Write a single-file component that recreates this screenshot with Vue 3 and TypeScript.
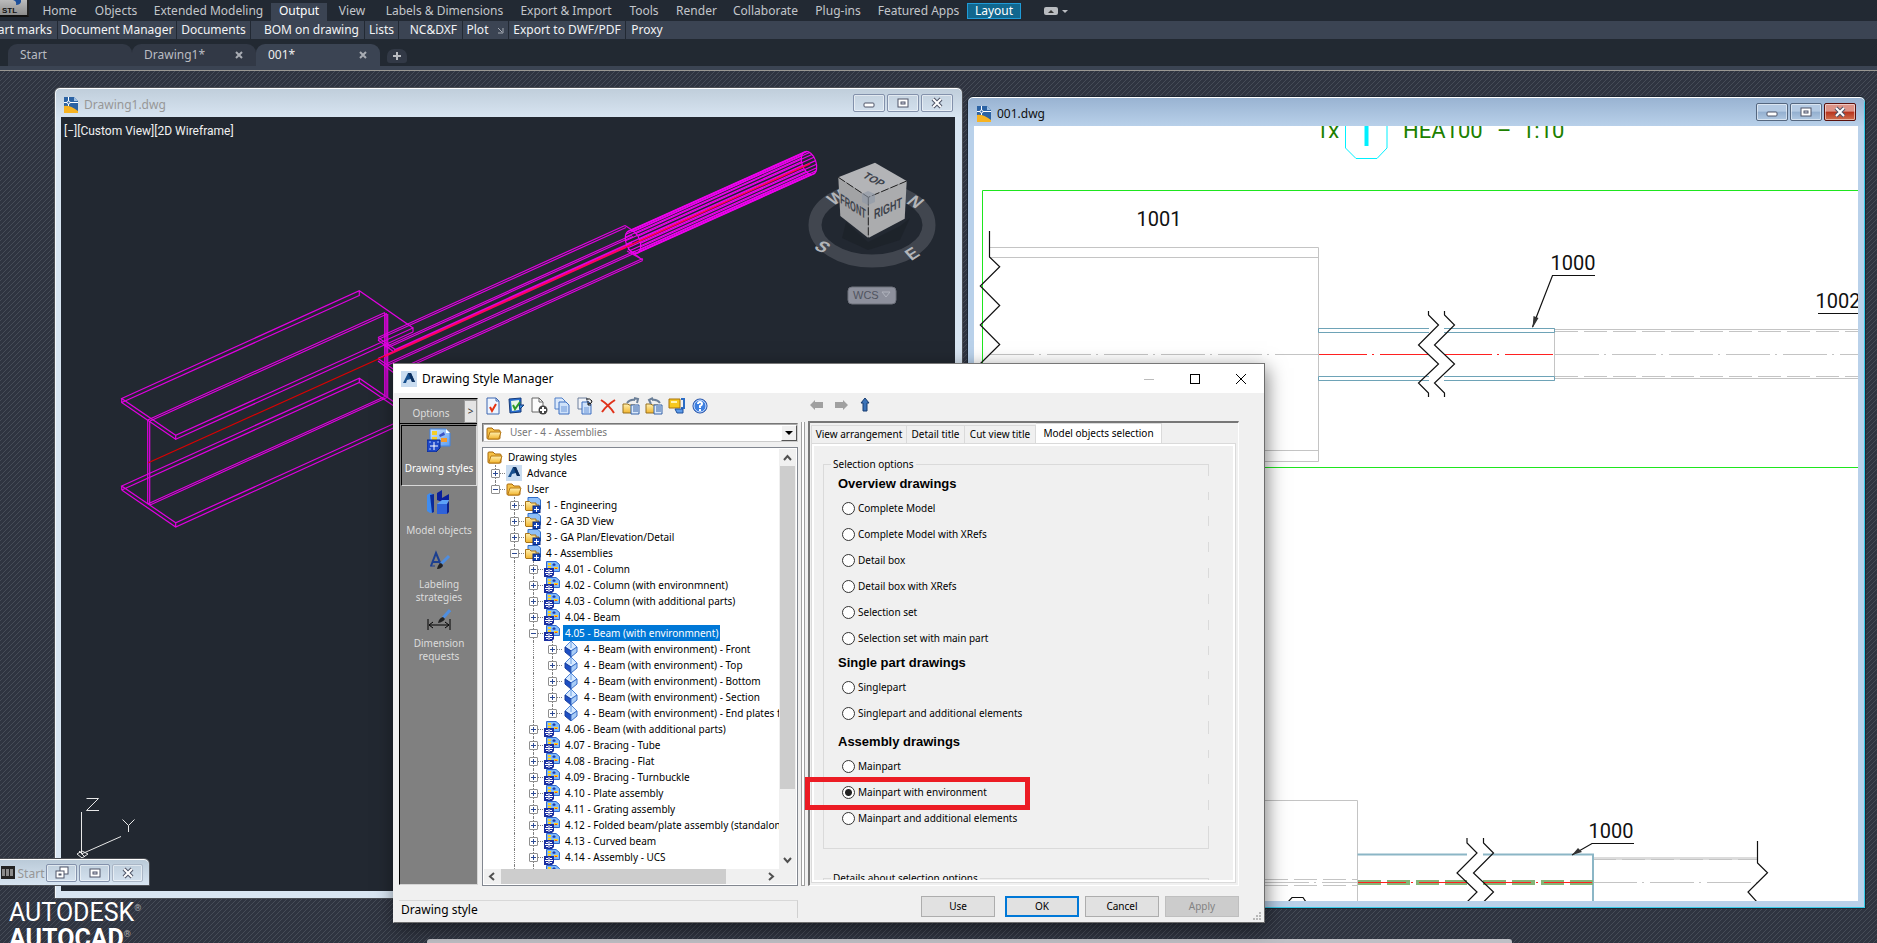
<script setup lang="ts">
import { ref } from 'vue'

interface Slot { label: string; width: number }
interface TreeRow { level: number; label: string; icon: string; state?: 'open' | 'closed'; last?: boolean }

const menus: Slot[] = [
  { label: 'Home', width: 53 }, { label: 'Objects', width: 60 }, { label: 'Extended Modeling', width: 125 },
  { label: 'Output', width: 56 }, { label: 'View', width: 50 }, { label: 'Labels & Dimensions', width: 135 },
  { label: 'Export & Import', width: 108 }, { label: 'Tools', width: 48 }, { label: 'Render', width: 57 },
  { label: 'Collaborate', width: 81 }, { label: 'Plug-ins', width: 64 }, { label: 'Featured Apps', width: 97 },
  { label: 'Layout', width: 54 },
]
const panels: Slot[] = [
  { label: 'Part marks', width: 58 }, { label: 'Document Manager', width: 119 }, { label: 'Documents', width: 74 },
  { label: 'BOM on drawing', width: 114 }, { label: 'Lists', width: 34 }, { label: 'NC&DXF', width: 64 },
  { label: 'Plot', width: 46 }, { label: 'Export to DWF/PDF', width: 117 }, { label: 'Proxy', width: 42 },
]
const activeMenu = ref('Output')

const options = [
  { id: 'ds', lines: ['Drawing styles'] },
  { id: 'mo', lines: ['Model objects'] },
  { id: 'ls', lines: ['Labeling', 'strategies'] },
  { id: 'dr', lines: ['Dimension', 'requests'] },
]
const activeOption = ref('ds')

const tools = ['check', 'apply', 'new', 'copy', 'copyto', 'delete', 'import', 'export', 'archive', 'help']

const rows: TreeRow[] = [
  { level: 0, label: 'Drawing styles', icon: 'folder' },
  { level: 1, label: 'Advance', icon: 'adv', state: 'closed' },
  { level: 1, label: 'User', icon: 'folder', state: 'open', last: true },
  { level: 2, label: '1 - Engineering', icon: 'group', state: 'closed' },
  { level: 2, label: '2 - GA 3D View', icon: 'group', state: 'closed' },
  { level: 2, label: '3 - GA Plan/Elevation/Detail', icon: 'group', state: 'closed' },
  { level: 2, label: '4 - Assemblies', icon: 'group', state: 'open' },
  { level: 3, label: '4.01 - Column', icon: 'style', state: 'closed' },
  { level: 3, label: '4.02 - Column (with environmnent)', icon: 'style', state: 'closed' },
  { level: 3, label: '4.03 - Column (with additional parts)', icon: 'style', state: 'closed' },
  { level: 3, label: '4.04 - Beam', icon: 'style', state: 'closed' },
  { level: 3, label: '4.05 - Beam (with environmnent)', icon: 'style', state: 'open' },
  { level: 4, label: '4 - Beam (with environment) - Front', icon: 'cube', state: 'closed' },
  { level: 4, label: '4 - Beam (with environment) - Top', icon: 'cube', state: 'closed' },
  { level: 4, label: '4 - Beam (with environment) - Bottom', icon: 'cube', state: 'closed' },
  { level: 4, label: '4 - Beam (with environment) - Section', icon: 'cube', state: 'closed' },
  { level: 4, label: '4 - Beam (with environment) - End plates f', icon: 'cube', state: 'closed', last: true },
  { level: 3, label: '4.06 - Beam (with additional parts)', icon: 'style', state: 'closed' },
  { level: 3, label: '4.07 - Bracing - Tube', icon: 'style', state: 'closed' },
  { level: 3, label: '4.08 - Bracing - Flat', icon: 'style', state: 'closed' },
  { level: 3, label: '4.09 - Bracing - Turnbuckle', icon: 'style', state: 'closed' },
  { level: 3, label: '4.10 - Plate assembly', icon: 'style', state: 'closed' },
  { level: 3, label: '4.11 - Grating assembly', icon: 'style', state: 'closed' },
  { level: 3, label: '4.12 - Folded beam/plate assembly (standalon', icon: 'style', state: 'closed' },
  { level: 3, label: '4.13 - Curved beam', icon: 'style', state: 'closed' },
  { level: 3, label: '4.14 - Assembly - UCS', icon: 'style', state: 'closed' },
  { level: 3, label: '', icon: 'style' },
]
const selectedRow = ref('4.05 - Beam (with environmnent)')

const tabs: Slot[] = [
  { label: 'View arrangement', width: 96 }, { label: 'Detail title', width: 58 },
  { label: 'Cut view title', width: 71 }, { label: 'Model objects selection', width: 126 },
]
const activeTab = ref('Model objects selection')

const groups = [
  { title: 'Overview drawings', items: ['Complete Model', 'Complete Model with XRefs', 'Detail box', 'Detail box with XRefs', 'Selection set', 'Selection set with main part'] },
  { title: 'Single part drawings', items: ['Singlepart', 'Singlepart and additional elements'] },
  { title: 'Assembly drawings', items: ['Mainpart', 'Mainpart with environment', 'Mainpart and additional elements'] },
]
const selection = ref('Mainpart with environment')

/* Generator lines of the tube: one per step round its end ellipses. */
const tubeLines = Array.from({ length: 20 }, (_, i) => {
  const a = (i / 20) * Math.PI * 2
  const t = (-20 * Math.PI) / 180
  const u = 7 * Math.cos(a)
  const v = 12 * Math.sin(a)
  const dx = u * Math.cos(t) - v * Math.sin(t)
  const dy = u * Math.sin(t) + v * Math.cos(t)
  return { x1: 633 + dx, y1: 242 + dy, x2: 809 + dx, y2: 163 + dy }
})
const zigTop = '0,0 0,4 10,14 -10,34 10,53 -10,72 0,82 0,86'
const zigLow = '0,0 0,5 10,15 -10,35 10,54 0,64'
</script>

<template>
  <div class="app">
    <svg class="defs" aria-hidden="true">
      <defs>
        <linearGradient id="gold" x1="0" y1="0" x2="0" y2="1"><stop offset="0" stop-color="#fff0b0" /><stop offset="1" stop-color="#f2b52e" /></linearGradient>
        <linearGradient id="sky" x1="0" y1="0" x2="1" y2="1"><stop offset="0" stop-color="#cfe6ff" /><stop offset="1" stop-color="#5c9df0" /></linearGradient>
        <symbol id="i-folder" viewBox="0 0 16 16">
          <path d="M1 13V4q0-1 1-1h4l2 2h5q1 0 1 1v7q0 1-1 1H2q-1 0-1-1z" fill="#f5c045" stroke="#a8690c" />
          <path d="M2 13L4 7h11l-2 6q0 1-1 1H2z" fill="url(#gold)" stroke="#b87a14" />
        </symbol>
        <symbol id="i-adv" viewBox="0 0 16 16">
          <rect width="16" height="16" fill="#c9dcf0" />
          <path d="M2 12L7 2h3l4 9-3 0-1-3-4 1-1 3z" fill="#17508f" /><path d="M7 2h3l4 9h-3L8 4z" fill="#0c2f5e" />
        </symbol>
        <symbol id="i-group" viewBox="0 0 16 16">
          <path d="M3 .5h10l2.500 2.500v9H3z" fill="#8fc0f8" stroke="#2f6cc8" />
          <path d="M.5 13V4.500h4L6 6h5v2h3l-3 5.500H1z" fill="url(#gold)" stroke="#a8741a" />
          <rect x="8" y="9" width="7" height="6.500" fill="#1747b8" stroke="#0b2a80" /><path d="M11.500 10v5M9 12.500h5" stroke="#fff" />
        </symbol>
        <symbol id="i-style" viewBox="0 0 16 16">
          <path d="M2.500 .5h9.500l3.500 3V10.500H2.500z" fill="#7fbafa" stroke="#2f66cc" />
          <path d="M4 2h3v2H4zM4 5h3v2H4zM10 6h4v2h-4z" fill="#ffd21f" /><path d="M8 4l2-2 2 2-2 1z" fill="#1c3fae" />
          <path d="M11 7h2v1h-2z" fill="#e8492b" />
          <path d="M0 7h10v7l-2 2H0z" fill="#1a2fa0" /><path d="M5 8v7M1 11.500h8" stroke="#fff" /><path d="M2 9.500h2M6 9.500h2M2 13.500h2M6 13.500h2" stroke="#fff" />
        </symbol>
        <symbol id="i-cube" viewBox="0 0 16 16">
          <path d="M8 0l6 6-6 4-6-4z" fill="#d6e9ff" stroke="#4f86d8" /><path d="M2 6l6 4v6l-6-5z" fill="#1d4fc4" stroke="#173c9c" />
          <path d="M14 6l-6 4v6l6-5z" fill="#a9cdf7" stroke="#3c70c8" /><path d="M8 1v6" stroke="#6aa0e6" />
        </symbol>
        <symbol id="i-dwg" viewBox="0 0 16 16">
          <path d="M1 0h10l4 4v10H1z" fill="#2c63a4" /><path d="M11 0l4 4h-4z" fill="#9fc0e2" />
          <path d="M1 9q6-1 14 5v2H1z" fill="#f7b322" /><path d="M5.500 0v9M1 5.500h14" stroke="#fff" /><circle cx="5.500" cy="5.500" r="1.500" fill="#2c63a4" stroke="#fff" />
        </symbol>
        <symbol id="i-check" viewBox="0 0 18 18">
          <path d="M3 1h9l3 3v13H3z" fill="#eef5ff" stroke="#3d66b0" /><path d="M12 1v3h3" fill="none" stroke="#3d66b0" />
          <path d="M6 10l2 4 4-7" fill="none" stroke="#e63312" stroke-width="2" />
        </symbol>
        <symbol id="i-apply" viewBox="0 0 18 18">
          <path d="M2 2l12-1v14L3 16z" fill="#2a6fd0" stroke="#163b7a" /><path d="M4 4l8-1v10l-7 1z" fill="#e9f6e4" />
          <path d="M6 8l2 4 5-7" fill="none" stroke="#2d9b28" stroke-width="2" /><path d="M12 8l5 0-4 4z" fill="#3a8bdd" stroke="#163b7a" />
        </symbol>
        <symbol id="i-new" viewBox="0 0 18 18">
          <path d="M2 1h7l4 4v10H2z" fill="#fbfbfb" stroke="#666" /><path d="M9 1v4h4" fill="none" stroke="#666" />
          <circle cx="13" cy="13" r="4.500" fill="#444" /><path d="M13 10v6M10 13h6" stroke="#fff" stroke-width="2" />
        </symbol>
        <symbol id="i-copy" viewBox="0 0 18 18">
          <path d="M2 1h7l3 3v8H2z" fill="#dbe9fb" stroke="#4f7fc8" /><path d="M6 5h7l3 3v9H6z" fill="#cfe2fa" stroke="#3d6fc0" />
          <path d="M8 10h6M8 12h6M8 14h6" stroke="#6c97d8" />
        </symbol>
        <symbol id="i-copyto" viewBox="0 0 18 18">
          <path d="M2 1h9v11H2z" fill="#f2f4f8" stroke="#6d7f9c" /><path d="M6 5h7l2 2v10H6z" fill="#cfe2fa" stroke="#3d6fc0" />
          <path d="M8 11h5M8 13h5M8 15h5" stroke="#6c97d8" /><path d="M10 2q4-1 6 2M16 4q0 3-4 3M12 4v4h3" fill="none" stroke="#111" />
        </symbol>
        <symbol id="i-delete" viewBox="0 0 18 18"><path d="M2 3q8 5 13 13M16 3Q8 8 3 15" fill="none" stroke="#e0321a" stroke-width="2" /></symbol>
        <symbol id="i-import" viewBox="0 0 18 18">
          <path d="M1 16V7h5l1 1h6v8z" fill="url(#gold)" stroke="#98711e" /><path d="M5 6q3-4 8-3M12 1l4 1-1 4" fill="none" stroke="#6b7f98" stroke-width="2" />
          <path d="M9 8h8v9H9z" fill="#dbe9fb" stroke="#3562a8" /><path d="M11 10h5M11 12h5M11 14h5" stroke="#3562a8" />
        </symbol>
        <symbol id="i-export" viewBox="0 0 18 18">
          <path d="M1 16V7h5l1 1h6v8z" fill="url(#gold)" stroke="#98711e" /><path d="M15 6q-3-4-8-3M8 1L4 3l2 4" fill="none" stroke="#6b7f98" stroke-width="2" />
          <path d="M9 8h8v9H9z" fill="#dbe9fb" stroke="#3562a8" /><path d="M11 10h5M11 12h5M11 14h5" stroke="#3562a8" />
        </symbol>
        <symbol id="i-archive" viewBox="0 0 18 18">
          <path d="M1 2h11v9H1z" fill="#f7c81e" stroke="#a8730c" /><path d="M3 4h6v2H3z" fill="#fff3b0" />
          <path d="M13 2h3v9h-2v4" fill="none" stroke="#2c6cc4" stroke-width="2" /><path d="M7 12h8v4H9z" fill="#5e9be8" stroke="#1c4f9c" />
        </symbol>
        <symbol id="i-help" viewBox="0 0 18 18">
          <circle cx="9" cy="9" r="7" fill="#3d7fe0" stroke="#1746a0" /><circle cx="9" cy="9" r="6" fill="none" stroke="#cfe2ff" />
          <path d="M7 7q0-2 2-2t2 2q0 1-2 2v2M9 12v2" fill="none" stroke="#fff" stroke-width="2" />
        </symbol>
        <symbol id="o-ds" viewBox="0 0 24 24">
          <path d="M3 1h16l4 4v13H3z" fill="url(#sky)" stroke="#3f83e6" /><path d="M5 3h5v4H5zM5 9h5v4H5z" fill="#f5cf28" /><path d="M12 7l5-3 1 3-5 2z" fill="#3b53c4" />
          <path d="M14 10h6v4h-6z" fill="#f59a2a" /><path d="M19 1l4 4h-4z" fill="#fff" />
          <path d="M0 12h13v8l-4 4H0z" fill="#1f49c8" stroke="#0c2a8c" /><path d="M7 14v8M3 18h8" stroke="#fff" /><path d="M2 14h2M10 14h2M2 21h2" stroke="#9fc0ff" />
        </symbol>
        <symbol id="o-mo" viewBox="0 0 24 24">
          <path d="M0 5l3-2 4 2v17l-4 1-3-2z" fill="#3f8cf0" /><path d="M3 5l4-1v18l-2 1z" fill="#0a2a9a" />
          <path d="M10 3l5-3v8l7-4v6l-7 2-5-2z" fill="#0a1f9c" /><path d="M10 14l5-4 7 0-2 4z" fill="#5da2f8" /><path d="M10 14h10v10H10z" fill="#2f62d8" /><path d="M20 14l2-3v11l-2 2z" fill="#0a1f8a" />
        </symbol>
        <symbol id="o-ls" viewBox="0 0 24 24">
          <path d="M4 17L9 4l5 12M6 13h7" fill="none" stroke="#1c3f90" stroke-width="2" /><path d="M3 17h5M12 17h4" stroke="#1c3f90" />
          <path d="M22 7l-8 8" stroke="#4f8ee0" stroke-width="3" /><path d="M14 14q-3 1-4 6 5 0 6-4z" fill="#222" />
        </symbol>
        <symbol id="o-dr" viewBox="0 0 24 24">
          <path d="M1 11v11M23 11v11M3 17h18M6 14l-4 3 4 3M18 14l4 3-4 3" fill="none" stroke="#000" />
          <path d="M23 2l-7 8" stroke="#4f8ee0" stroke-width="3" /><path d="M16 9q-4 1-5 6 5-1 7-4z" fill="#222" />
        </symbol>
        <symbol id="w-min" viewBox="0 0 14 14"><rect x="2" y="7" width="10" height="4" rx="1" fill="#fff" stroke="#4f5568" /></symbol>
        <symbol id="w-max" viewBox="0 0 14 14"><rect x="2" y="3" width="10" height="8" fill="#fff" stroke="#4f5568" /><rect x="5" y="6" width="4" height="2" fill="#dde" stroke="#4f5568" /></symbol>
        <symbol id="w-res" viewBox="0 0 14 14"><rect x="5" y="1" width="8" height="7" fill="#fff" stroke="#4f5568" /><rect x="1" y="5" width="8" height="7" fill="#fff" stroke="#4f5568" /><rect x="4" y="8" width="2" height="1" fill="#dde" stroke="#4f5568" /></symbol>
        <symbol id="w-x" viewBox="0 0 14 14"><path d="M3 3l8 8M11 3l-8 8" stroke="#4f5568" stroke-width="4" /><path d="M3 3l8 8M11 3l-8 8" stroke="#fff" stroke-width="2" /></symbol>
      </defs>
    </svg>

    <header>
      <nav class="menu">
        <button class="stl" aria-label="STL"><svg viewBox="0 0 20 6" aria-hidden="true"><path d="M9 0q4 1 3 5 4 0 5-3V0z" fill="#1d4f9a" /></svg><span>STL</span></button>
        <button
          v-for="m in menus" :key="m.label" class="menu-item"
          :class="{ on: m.label === activeMenu, layout: m.label === 'Layout' }"
          :style="{ width: m.width + 'px' }" @click="activeMenu = m.label"
        >{{ m.label }}</button>
        <button class="mini" aria-label="Ribbon display">
          <svg width="24" height="10" viewBox="0 0 24 10" aria-hidden="true"><rect width="14" height="8" y="1" rx="2" fill="#b9bcc1" /><path d="M4 7l3-3 3 3z" fill="#333" /><path d="M18 4h6l-3 3z" fill="#b9bcc1" /></svg>
        </button>
      </nav>
      <div class="panels">
        <button v-for="p in panels" :key="p.label" class="panel-item" :class="{ late: p.label === 'Part marks' || p.label === 'BOM on drawing' || p.label === 'NC&DXF' }" :style="{ width: p.width + 'px' }">
          {{ p.label }}
          <svg v-if="p.label === 'Plot'" width="7" height="7" viewBox="0 0 7 7" aria-hidden="true"><path d="M1 1l4 4M6 1v5H1" fill="none" stroke="#a6abb4" /></svg>
        </button>
      </div>
      <div class="files">
        <button class="file">Start</button>
        <div class="file"><span>Drawing1*</span><button class="fx" aria-label="Close Drawing1"><svg viewBox="0 0 8 8"><path d="M1 1l6 6M7 1L1 7" stroke="#a9adb4" stroke-width="2" /></svg></button></div>
        <div class="file current"><span>001*</span><button class="fx" aria-label="Close 001"><svg viewBox="0 0 8 8"><path d="M1 1l6 6M7 1L1 7" stroke="#a9adb4" stroke-width="2" /></svg></button></div>
        <button class="plus" aria-label="New tab"><svg width="8" height="8" viewBox="0 0 8 8"><path d="M4 0v8M0 4h8" stroke="#b9bcc1" stroke-width="2" /></svg></button>
      </div>
    </header>

    <main class="desk">
      <div class="brand"><p>AUTODESK<sup>®</sup></p><p class="b">AUTOCAD<sup>®</sup></p></div>
      <div class="cmd"></div>

      <section class="win w1">
        <div class="wbar">
          <svg class="dwg" aria-hidden="true"><use href="#i-dwg" /></svg><h2>Drawing1.dwg</h2>
          <button aria-label="Minimize"><svg><use href="#w-min" /></svg></button><button aria-label="Maximize"><svg><use href="#w-max" /></svg></button><button aria-label="Close"><svg><use href="#w-x" /></svg></button>
        </div>
        <svg class="cad" viewBox="61 117 894 775" preserveAspectRatio="xMinYMin slice">
          <text x="64" y="135" class="vp">[−][Custom View][2D Wireframe]</text>
          <g fill="none" stroke="#e000e0" stroke-width="1.200">
            <path d="M121.700 398.500L359.300 290.700 413 328 175.700 435.300zM121.700 402.500L359.300 295.500M175.700 439.300L413 332M121.700 402.500L175.700 439.300M121.700 398v5M175.700 435v5M359.300 291v5M413 328v4" />
            <path d="M121.700 486L359.300 378.300 413 415 175.700 522.700zM121.700 490L359.300 382.500 413 419M121.700 490L175.700 527 413 419M121.700 486v4M175.700 523v4M359.300 378v4" />
            <path d="M147.700 420V504M149.700 421V505M147.700 420L385 312.500M150 421L387 314M147.700 504L385 396.500M150 505L387 397.500" />
            <path d="M384.700 313V396M386.200 313V396M387.700 314V397" />
            <path d="M378 337.500L625 225.500M378 339.500L626 227.500M385 347L632 235M387 348L633 236.500M394 350L632 242M378 358.500L632 243M387 363.500L635 251M388 365L636 252.500M394 371.500L642.700 258.500M394 373.500L642.700 260.500" />
            <path d="M378 337.500L396 350M378 340L394 352M378 358.500L396 371M378 361L394 373M625 225.500L632 230M627 251L643 260M628 249L640 258" />
          </g>
          <path d="M148.300 462.700L385 356" stroke="#dd0000" stroke-width="1.200" />
          <g fill="none" stroke="#f000f0" stroke-width="1.200">
            <line v-for="(l, i) in tubeLines" :key="i" :x1="l.x1" :y1="l.y1" :x2="l.x2" :y2="l.y2" />
            <ellipse cx="633" cy="242" rx="7" ry="12" transform="rotate(-20 633 242)" /><ellipse cx="809" cy="163" rx="7" ry="12" transform="rotate(-20 809 163)" />
          </g>
          <path d="M385 356L626 247" stroke="#ff0060" stroke-width="2" /><path d="M626 247L810 163.700" stroke="#ff0050" stroke-width="1.500" />
          <ellipse cx="872" cy="225" rx="57" ry="36" fill="none" stroke="#41464f" stroke-width="13" />
          <path d="M846 222L868 242 900 226 910 218 900 240 868 250 842 238z" fill="#1a1f26" opacity=".6" />
          <g class="nesw">
            <text transform="translate(818 251) rotate(28) skewX(-20)">S</text><text transform="translate(916 258) rotate(-32) skewX(10)">E</text>
            <text transform="translate(911 206) rotate(28) skewX(-20)">N</text><text transform="translate(840 202) rotate(-30) skewX(10)">W</text>
          </g>
          <path d="M838.300 177.300L875 162.700 906.700 181 868.300 197.300z" fill="#b3b4b7" /><path d="M838.300 177.300L868.300 197.300V238L840.300 216z" fill="#a2a3a5" /><path d="M868.300 197.300L906.700 181 904.700 218.700 868.300 238z" fill="#abacae" />
          <path d="M838.300 177.300L868.300 197.300 906.700 181M868.300 197.300V238" fill="none" stroke="#222" stroke-dasharray="8 2" />
          <path d="M862 194l6-3 7 3v8l-7 3-6-3z" fill="#8e97a6" opacity=".6" />
          <g class="faces">
            <text transform="matrix(.75 .4 -.7 .6 871 182)">TOP</text><text transform="matrix(.62 .4 0 1.150 853 211)">FRONT</text><text transform="matrix(.75 -.34 0 1.150 888 213)">RIGHT</text>
          </g>
          <rect x="848" y="287" width="48" height="17" rx="4" fill="#8d909c" stroke="#6f727d" /><text x="853" y="299" class="wcs">WCS</text><path d="M882 292h8l-4 5z" fill="none" stroke="#b0b3bd" />
          <g fill="none" stroke="#e8e8e8"><path d="M81.500 812V854L121 836.500M77 854l5-3 6 3-6 4zM79 851l6 6" /><path d="M86.500 798.500H98.500L86.500 810.500H99M122.500 819.500l6 6 6-6M128.500 825.500v6.500" /></g>
        </svg>
      </section>

      <section class="win w2">
        <div class="wbar">
          <svg class="dwg" aria-hidden="true"><use href="#i-dwg" /></svg><h2>001.dwg</h2>
          <button aria-label="Minimize"><svg><use href="#w-min" /></svg></button><button aria-label="Maximize"><svg><use href="#w-max" /></svg></button><button class="red" aria-label="Close"><svg><use href="#w-x" /></svg></button>
        </div>
        <svg class="cad" viewBox="974 126 884 775" preserveAspectRatio="xMinYMin slice">
          <g class="green"><text x="1316" y="138">1x</text><text x="1403" y="138">HEA100</text><text x="1497" y="138">–</text><text x="1522" y="138">1:10</text></g>
          <path d="M1345.500 120V148L1356 158.500H1377L1387 148V120" fill="none" stroke="#00f0ff" /><path d="M1366.500 120V146" stroke="#00f0ff" stroke-width="4" />
          <path d="M1870 190.500H982.500V467.500H1870" fill="none" stroke="#1ee61e" />
          <g fill="none" stroke="#c4c4c4">
            <path d="M989 247.500H1318.500V461.500H989M989 257.500H1318.500M989 450.500H1318.500M1554.500 328V381" />
            <path d="M990 354.500H1318" stroke-dasharray="44 5 2 6" /><path d="M1555 354.500H1858" stroke-dasharray="44 5 2 6" />
            <path d="M1555 329.500H1858M1555 378.500H1858" /><path d="M1555 331.500H1858M1555 376.500H1858" stroke-dasharray="23 6" />
            <path d="M1265 800.500H1357.500V905" /><path d="M1265 879.500H1357M1265 885.500H1357" stroke-dasharray="23 6" /><path d="M1265 882.500H1357M1593 882.500H1757" stroke-dasharray="44 5 2 6" />
            <path d="M1593 858.500H1757" stroke="#dcdcdc" stroke-width="3" /><path d="M1593 859.500H1757" stroke-dasharray="23 6" />
          </g>
          <g fill="none" stroke="#6ea3b7">
            <path d="M1429 328.500H1318.500V332.500H1429M1429 376.500H1318.500V380.500H1429M1444 328.500H1554.500V332.500H1444M1444 376.500H1554.500V380.500H1444" />
            <path d="M1357.500 854.500H1467M1483 854.500H1593V905" stroke="#8bb6c6" stroke-width="2" />
          </g>
          <path d="M1319 354.500H1429M1444 354.500H1554" stroke="#ff2020" stroke-dasharray="48 5 2 6" />
          <path d="M1358 882.500H1467M1483 882.500H1593" stroke="#86b476" stroke-width="5" stroke-dasharray="23 6" /><path d="M1358 882.500H1467M1483 882.500H1593" stroke="#ff2020" stroke-dasharray="48 5 2 6" />
          <g fill="none" stroke="#111" stroke-width="1.200">
            <path d="M989.500 231V257L999.700 266.700 980.300 286 999.700 305.500 980.300 325 999.700 344.500 980 364" />
            <polyline :points="zigTop" transform="translate(1428.500 311)" /><polyline :points="zigTop" transform="translate(1444.500 311)" />
            <polyline :points="zigLow" transform="translate(1467 838)" /><polyline :points="zigLow" transform="translate(1483.500 838)" />
            <path d="M1757.500 841V863L1767.500 872.700 1748 892 1757 902M1288 902L1292 897.500H1303L1306 902" />
            <path d="M1532.500 327L1552.500 275.500H1595M1818 313.500H1858M1572 855L1592 843.500H1634" />
          </g>
          <path d="M1532.500 328l1-12 5 2zM1572 855l6-7 4 4z" fill="#333" />
          <g class="num"><text x="1159" y="226">1001</text><text x="1573" y="270">1000</text><text x="1838" y="308">1002</text><text x="1611" y="838">1000</text></g>
        </svg>
      </section>

      <section class="win mini-win">
        <div class="wbar"><span class="film"></span><h2>Start</h2>
          <button aria-label="Restore"><svg><use href="#w-res" /></svg></button><button aria-label="Maximize"><svg><use href="#w-max" /></svg></button><button class="dim" aria-label="Close"><svg><use href="#w-x" /></svg></button></div>
      </section>

      <section class="dialog" role="dialog" aria-label="Drawing Style Manager">
        <div class="dbar">
          <svg width="16" height="16" aria-hidden="true"><use href="#i-adv" /></svg><h1>Drawing Style Manager</h1>
          <button aria-label="Minimize"><svg width="12" height="12"><path d="M1 6.500h10" stroke="#bbb" /></svg></button>
          <button aria-label="Maximize"><svg width="12" height="12"><rect x="1.500" y="1.500" width="9" height="9" fill="none" stroke="#000" /></svg></button>
          <button aria-label="Close"><svg width="12" height="12"><path d="M1 1l10 10M11 1L1 11" stroke="#000" /></svg></button>
        </div>
        <div class="dbody">
          <aside class="opts">
            <div class="ohead"><span>Options</span><button aria-label="Collapse options">&gt;</button></div>
            <button v-for="o in options" :key="o.id" class="opt" :class="[o.id, { on: o.id === activeOption }]" @click="activeOption = o.id">
              <svg width="24" height="24" aria-hidden="true"><use :href="'#o-' + o.id" /></svg>
              <span v-for="l in o.lines" :key="l">{{ l }}</span>
            </button>
          </aside>
          <div class="mid">
            <div class="tools">
              <button v-for="t in tools" :key="t" :aria-label="t"><svg width="18" height="18"><use :href="'#i-' + t" /></svg></button>
            </div>
            <div class="combo">
              <svg width="16" height="16" aria-hidden="true"><use href="#i-folder" /></svg>
              <select aria-label="Style folder"><option>User - 4 - Assemblies</option></select><i></i>
            </div>
            <div class="tree">
              <div class="tview">
                <ul role="tree">
                  <li v-for="(r, n) in rows" :key="n" role="treeitem" @click="selectedRow = r.label">
                    <span v-for="k in r.level" :key="k" class="cell" :class="{ line: k > 1 || r.level === 1, half: k === r.level && r.last, arm: k === r.level }">
                      <b v-if="k === r.level && r.state" :class="r.state"></b>
                    </span>
                    <svg width="16" height="16" aria-hidden="true"><use :href="'#i-' + r.icon" /></svg>
                    <span v-if="r.label" class="label" :class="{ sel: r.label === selectedRow }">{{ r.label }}</span>
                  </li>
                </ul>
                <div class="vs"><svg width="9" height="17"><path d="M1 11l3.500-4L8 11" /></svg><div class="thumb"></div><svg width="9" height="17"><path d="M1 6l3.500 4L8 6" /></svg></div>
              </div>
              <div class="hs"><svg width="17" height="9"><path d="M10 1L6 4.500 10 8" /></svg><div class="thumb"></div><svg width="17" height="9"><path d="M7 1l4 3.500L7 8" /></svg></div>
            </div>
          </div>
          <div class="split"></div>
          <div class="right">
            <div class="navs">
              <button aria-label="Back"><svg width="14" height="14"><path d="M0 7l5-5v2h8v6H5v2z" fill="#a0a0a0" /></svg></button>
              <button aria-label="Forward"><svg width="14" height="14"><path d="M14 7L9 2v2H1v6h8v2z" fill="#a0a0a0" /></svg></button>
              <button aria-label="Up"><svg width="14" height="14"><path d="M7 0l4 5H9v8H5V5H3z" fill="#3b73b8" stroke="#173c70" /></svg></button>
            </div>
            <div class="frame">
              <div class="tabs" role="tablist">
                <button v-for="t in tabs" :key="t.label" role="tab" :class="{ on: t.label === activeTab }" :style="{ width: t.width + 'px' }" @click="activeTab = t.label">{{ t.label }}</button>
              </div>
              <div class="page">
                <fieldset>
                  <legend>Selection options</legend>
                  <div v-for="g in groups" :key="g.title" class="grp">
                    <h3>{{ g.title }}</h3>
                    <label v-for="i in g.items" :key="i"><input v-model="selection" type="radio" name="sel" :value="i">{{ i }}</label>
                  </div>
                </fieldset>
                <fieldset class="second"><legend>Details about selection options</legend></fieldset>
              </div>
            </div>
          </div>
        </div>
        <footer>
          <div class="status">Drawing style</div>
          <div class="btns"><button>Use</button><button class="ok">OK</button><button>Cancel</button><button disabled>Apply</button></div>
          <svg class="grip" width="10" height="10"><path d="M7 1h2M4 4h2M7 4h2M1 7h2M4 7h2M7 7h2" stroke="#b8b8b8" stroke-width="2" /></svg>
        </footer>
        <div class="mark"></div>
      </section>
    </main>
  </div>
</template>

<style>
html, body { margin: 0; background: #222933; overflow: hidden; }
</style>

<style scoped>
* { box-sizing: border-box; }
.app { display: flex; flex-direction: column; height: 100vh; overflow: hidden; font: 12px/16px "Noto Sans", "Open Sans", sans-serif; color: #c3c6cb; }
button, select, input { font: inherit; color: inherit; margin: 0; padding: 0; border: 0; background: none; }
svg { display: block; }
.defs { position: absolute; width: 0; height: 0; }
h1, h2, h3, p, ul { margin: 0; padding: 0; font-weight: normal; }
.menu { display: flex; height: 21px; background: #222933; }
.stl { width: 29px; height: 17px; margin-right: 4px; border-right: 2px solid #222; border-bottom: 2px solid #111; background: linear-gradient(#bbb, #8d8d8d); display: flex; flex-direction: column; align-items: center; font: bold 8px/9px "Liberation Sans", sans-serif; color: #111; }
.stl svg { width: 20px; height: 6px; }
.stl span { margin-right: 8px; }
.menu-item { flex: none; white-space: nowrap; line-height: 21px; text-align: center; }
.menu-item.on { background: #3b4453; color: #fff; margin-top: 3px; height: 18px; line-height: 16px; padding-bottom: 2px; }
.menu-item.layout { margin: 3px 0 2px; line-height: 14px; background: #11678f; border: 1px solid #1f9bd8; color: #fff; height: 16px; }
.mini { margin: 0 0 0 23px; }
.panels { display: flex; height: 18px; background: #3b4453; color: #f2f3f5; }
.panel-item { flex: none; height: 18px; line-height: 18px; border-right: 1px solid #222933; white-space: nowrap; display: flex; align-items: center; justify-content: center; gap: 9px; }
.panel-item.late { justify-content: flex-end; padding-right: 5px; }
.panel-item:last-child { border: 0; }
.files { display: flex; align-items: flex-start; height: 31px; padding: 5px 0 0 8px; background: #222932; border-bottom: 4px solid #3b4453; }
.file { display: flex; align-items: center; justify-content: space-between; width: 124px; height: 22px; padding: 0 13px 0 12px; border-radius: 9px 9px 0 0; background: #323946; color: #b9bcc2; text-align: left; }
.file.current { background: #3b4453; color: #eee; }
.fx { width: 8px; height: 8px; }
.plus { display: flex; align-items: center; justify-content: center; width: 20px; height: 14px; margin: 5px 0 0 7px; border-radius: 7px 7px 3px 3px; background: #323946; }
.desk { position: relative; flex: 1; overflow: hidden; border-top: 1px solid #9a9892; background: #2f3440 linear-gradient(135deg, transparent 43%, #464c57 43% 57%, transparent 57%) 0 0 / 5px 5px; background-clip: padding-box; }
.brand { position: absolute; left: 9px; bottom: -9px; color: #fff; font: 300 25px/26px Roboto, sans-serif; }
.brand p.b { font-weight: 700; }
.brand sup { font-size: 9px; line-height: 0; color: #aaa; vertical-align: 10px; }
.cmd { position: absolute; left: 427px; right: 365px; bottom: 0; height: 4px; border-radius: 3px 3px 0 0; background: #bfbfc5; }

.win { position: absolute; display: flex; flex-direction: column; border: 1px solid #4c4f55; border-radius: 6px 6px 0 0; padding: 0 7px 7px 6px; }
.w1 { left: 54px; top: 16px; width: 909px; height: 812px; background: linear-gradient(#bfcdda, #d8e5f2 30px); box-shadow: inset 0 1px #fff, inset 1px 0 #f3f7fb; }
.w2 { left: 967px; top: 25px; width: 899px; height: 813px; background: linear-gradient(#98b2d1, #b9d1ea 30px); border-color: #1d2733; box-shadow: inset 0 1px #fff, inset -1px -1px #35cbe8; }
.mini-win { left: -8px; bottom: 57px; width: 158px; height: 28px; background: linear-gradient(#b9c9d7, #d8e5f2); padding: 0 4px; box-shadow: inset 0 1px #fff; }
.wbar { display: flex; align-items: center; height: 29px; flex: none; gap: 2px; padding: 1px 2px 0; }
.mini-win .wbar { height: 27px; padding: 0 2px 0 0; }
.wbar h2 { flex: 1; font-size: 12px; line-height: 18px; padding: 4px 0 0 3px; }
.w1 h2, .mini-win h2 { color: #979797; }
.w2 h2 { color: #111; }
.mini-win h2 { padding: 2px 0 0 1px; }
.dwg { width: 16px; height: 16px; margin: 4px 0 0; }
.wbar button { width: 32px; height: 18px; border: 1px solid #8391ab; border-radius: 2px; box-shadow: inset 0 0 0 1px rgba(255, 255, 255, .5); display: flex; align-items: center; justify-content: center; }
.wbar button svg { width: 14px; height: 14px; }
.w2 .wbar button { border-color: #55677f; background: linear-gradient(#b4cae3 45%, #93afcf 50%, #b0c8e2); }
.w2 .wbar button.red { border-color: #59100c; background: linear-gradient(#dd9488 45%, #b8331c 50%, #d0704f); }
.wbar button.dim { border-color: #aab6c6; }
.film { width: 14px; height: 13px; margin-left: 4px; border: 3px solid #222; border-width: 3px 1px; background: repeating-linear-gradient(90deg, #8a8a8a 0 3px, #222 3px 4px); }
.cad { width: 100%; flex: 1; min-height: 0; }
.w1 .cad { background: #222831; }
.w2 .cad { background: #fff; }
.vp { font: 12px Roboto, sans-serif; fill: #f0f0f0; }
.nesw { font: bold 17px "Liberation Sans", sans-serif; fill: #b3b5b9; text-anchor: middle; }
.faces { font: bold 12px "Liberation Sans", sans-serif; fill: #3d424b; text-anchor: middle; }
.wcs { font: 11px "Liberation Sans", sans-serif; fill: #50545f; }
.num { font: 20px Roboto, sans-serif; fill: #111; text-anchor: middle; }
.green { font: 22px Roboto, sans-serif; fill: #1c8000; }

.dialog { position: absolute; left: 393px; top: 292px; width: 872px; display: flex; flex-direction: column; border: 1px solid #6d6d6d; border-left-color: #f0f0f0; border-top-color: #777; background: #f0f0f0; box-shadow: 2px 5px 18px rgba(0, 0, 0, .5); color: #000; font: 10px/13px "Noto Sans", "Open Sans", sans-serif; }
.dbar { display: flex; align-items: center; height: 29px; background: #fff; padding-left: 7px; }
.dbar h1 { flex: 1; font-size: 12px; line-height: 16px; padding-left: 5px; }
.dbar button { width: 46px; height: 29px; display: flex; align-items: center; justify-content: center; }
.dbody { display: flex; height: 493px; padding: 0 25px 0 5px; }
.opts { width: 79px; flex: none; margin: 5px 4px 1px 0; background: #808080; border: 1px solid #000; border-right-color: #d4d4d4; border-bottom-color: #d4d4d4; color: #dcdcdc; }
.ohead { display: flex; align-items: center; height: 25px; border-bottom: 1px solid #000; }
.ohead span { flex: 1; text-align: center; padding: 4px 2px 0 0; }
.ohead button { width: 13px; height: 23px; background: #e4e4e4; border: 1px solid #999; color: #333; }
.opt { display: flex; flex-direction: column; align-items: center; width: 76px; margin-left: 1px; }
.opt.ds { height: 61px; margin-top: 1px; border: 1px solid transparent; padding-top: 2px; }
.opt.on { border-color: #000 #d8d8d8 #d8d8d8 #000; color: #fff; }
.opt.ds svg, .opt.mo svg { margin-bottom: 10px; }
.opt.mo { padding-top: 4px; height: 60px; }
.opt.ls svg, .opt.dr svg { margin-bottom: 5px; }
.opt.ls { height: 62px; padding-top: 3px; }
.mid { width: 316px; flex: none; }
.tools { display: flex; gap: 5px; height: 30px; padding: 4px 0 0 2px; }
.tools button { width: 18px; height: 18px; }
.combo { display: flex; align-items: center; height: 19px; margin-bottom: 5px; padding-left: 3px; background: #fff; border: 1px solid #777; border-right-color: #ccc; border-bottom-color: #ccc; box-shadow: inset 1px 1px #aaa; }
.combo select { flex: 1; appearance: none; padding-left: 8px; color: #777; }
.combo i { width: 16px; height: 16px; border: 1px solid #fff; border-right-color: #555; border-bottom-color: #555; background: #f0f0f0; position: relative; }
.combo i::after { content: ""; position: absolute; left: 3px; top: 5px; border: 4px solid transparent; border-top-color: #000; border-bottom: 0; }
.tree { height: 439px; border: 1px solid #828790; background: #fff; padding: 1px; }
.tview { display: flex; height: 420px; overflow: hidden; }
.tview ul { flex: 1; min-width: 0; overflow: hidden; list-style: none; }
.tview li { display: flex; height: 16px; padding-left: 2px; white-space: nowrap; }
.tview li svg { flex: none; margin: 0 3px 0 1px; }
.cell { flex: none; width: 19px; height: 16px; position: relative; }
.cell.line::before { content: ""; position: absolute; left: 9px; top: 0; bottom: 0; border-left: 1px dotted #808080; }
.cell.half::before { bottom: 8px; }
.cell.arm::after { content: ""; position: absolute; left: 9px; right: 0; top: 8px; border-top: 1px dotted #808080; }
.cell b { position: absolute; z-index: 1; left: 5px; top: 4px; width: 9px; height: 9px; border: 1px solid #8f8f8f; border-radius: 1px; background: linear-gradient(#2c4a94, #2c4a94) 1px 3px / 5px 1px no-repeat #fff; }
.cell b.closed { background: linear-gradient(#2c4a94, #2c4a94) 1px 3px / 5px 1px no-repeat, linear-gradient(#2c4a94, #2c4a94) 3px 1px / 1px 5px no-repeat #fff; }
.label { line-height: 16px; padding: 0 2px; }
.label.sel { background: #0078d7; color: #fff; }
.vs { display: flex; flex-direction: column; align-items: center; width: 17px; background: #f0f0f0; }
.vs .thumb { width: 15px; height: 323px; background: #cdcdcd; }
.vs svg:last-child { margin-top: auto; }
.vs svg, .hs svg { flex: none; fill: none; stroke: #505050; stroke-width: 2; }
.hs { display: flex; align-items: center; height: 15px; padding-right: 17px; background: #f0f0f0; }
.hs .thumb { width: 225px; height: 15px; margin-right: auto; background: #cdcdcd; }
.split { width: 4px; flex: none; margin: 29px 3px 0; border: 1px solid #a0a0a0; border-top: 0; background: #fff; }
.right { flex: 1; min-width: 0; display: flex; flex-direction: column; }
.navs { display: flex; align-items: flex-start; gap: 10px; height: 28px; padding: 5px 0 0 2px; }
.frame { flex: 1; min-height: 0; display: flex; flex-direction: column; border: 1px solid #fff; border-top: 2px solid #777; border-left: 2px solid #777; padding: 0 2px 2px 1px; }
.tabs { display: flex; align-items: flex-end; height: 20px; flex: none; }
.tabs button { height: 18px; border: 1px solid #dadada; border-left: 0; border-bottom: 0; background: #f0f0f0; white-space: nowrap; text-align: center; }
.tabs button:first-child { border-left: 1px solid #dadada; }
.tabs button.on { height: 21px; margin-bottom: -1px; background: #fff; padding-bottom: 2px; }
.page { flex: 1; min-height: 0; overflow: hidden; border: 1px solid #dadada; outline: 2px solid #fff; outline-offset: -3px; padding: 14px 26px 0 11px; }
fieldset { min-width: 0; height: 391px; margin: 0; padding: 5px 0 0 14px; border: 1px solid #dadada; }
legend { padding: 0 2px; margin-left: -7px; }
fieldset.second { height: 40px; margin-top: 23px; padding-top: 0; }
.grp { width: 380px; margin-bottom: 9px; }
.grp:last-child { margin-top: 13px; }
.grp h3 { height: 16px; margin: 0 0 8px; background: #f0f0f0; font: bold 13px/16px "Liberation Sans", sans-serif; }
.grp label { display: flex; align-items: center; height: 16px; margin: 0 0 10px 4px; background: #f0f0f0; }
.grp label:last-child { margin-bottom: 0; }
.grp input { appearance: none; width: 13px; height: 13px; margin: 0 3px 0 0; border: 1px solid #333; border-radius: 50%; background: #fff; }
.grp input:checked { background: radial-gradient(circle, #222 3px, #fff 4px); }
footer { display: flex; height: 36px; padding: 0 2px 0 5px; }
.status { width: 399px; height: 18px; margin-top: 14px; border-top: 1px solid #d8d8d8; border-right: 1px solid #d0d0d0; padding-left: 2px; font-size: 12px; line-height: 17px; }
.btns { display: flex; gap: 6px; margin: 10px 0 0 123px; }
.btns button { width: 74px; height: 21px; border: 1px solid #adadad; background: #e1e1e1; }
.btns button:first-child { margin-right: 4px; }
.btns .ok { border: 2px solid #0078d7; }
.btns button:disabled { background: #ccc; border-color: #bfbfbf; color: #838383; }
.grip { margin: 26px 0 0 auto; }
.mark { position: absolute; left: 411px; top: 413px; width: 225px; height: 33px; border: 5px solid #ec1c24; pointer-events: none; }
</style>
